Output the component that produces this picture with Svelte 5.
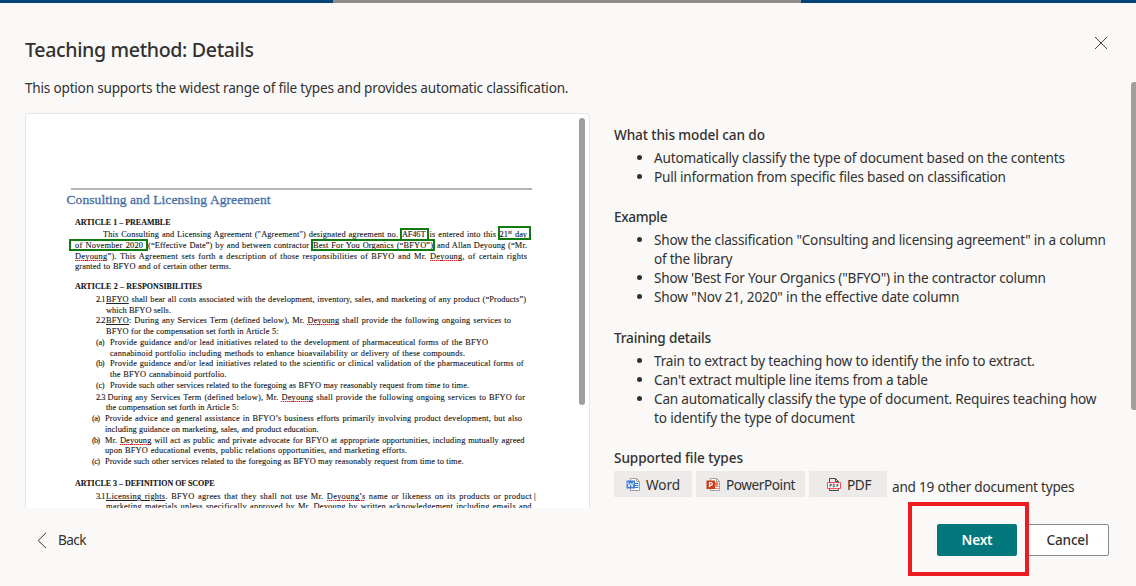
<script>
  // Spreads text over a fixed width; `word` weights how much goes to the spaces.
  function fit(node, { width, word = 0 }) {
    const text = node.textContent;
    const spaces = text.split(' ').length - 1;
    const natural = node.getBoundingClientRect().width;
    const unit = (width - natural) / (text.length - 1 + word * spaces);
    node.style.letterSpacing = unit + 'px';
    node.style.wordSpacing = unit * word + 'px';
  }

  // "~word~" is a spelling mark, "_word_" is underlined.
  function parts(text) {
    return text
      .split(/(~[^~]+~|_[^_]+_)/)
      .filter(Boolean)
      .map((t) =>
        t[0] === '~'
          ? { t: t.slice(1, -1), c: 'spell' }
          : t[0] === '_'
            ? { t: t.slice(1, -1), c: 'under' }
            : { t, c: '' }
      );
  }

  const sections = [
    {
      title: 'What this model can do',
      w: 151,
      items: [
        [['Automatically classify the type of document based on the contents', 411]],
        [['Pull information from specific files based on classification', 352]]
      ]
    },
    {
      title: 'Example',
      w: 53.5,
      items: [
        [
          ['Show the classification "Consulting and licensing agreement" in a column', 452],
          ['of the library', 78.5]
        ],
        [['Show \'Best For Your Organics ("BFYO") in the contractor column', 392]],
        [['Show "Nov 21, 2020" in the effective date column', 305.5]]
      ]
    },
    {
      title: 'Training details',
      w: 97,
      items: [
        [['Train to extract by teaching how to identify the info to extract.', 381]],
        [["Can't extract multiple line items from a table", 274]],
        [
          ['Can automatically classify the type of document. Requires teaching how', 442.5],
          ['to identify the type of document', 201]
        ]
      ]
    }
  ];

  // Row centre, then segments of [start, end, text].
  const source = [
    [222, true, [75, 170.5, 'ARTICLE 1 – PREAMBLE']],
    [234, false, [103, 398, 'This Consulting and Licensing Agreement ("Agreement") designated agreement no.'], [402, 425.5, 'AF46T'], [429.5, 496, 'is entered into this'], [499.5, 508, '21'], [508, 512, 'st'], [515, 527, 'day']],
    [245, false, [75, 143, 'of November 2020'], [148, 309, '(“Effective Date”) by and between contractor'], [313, 433, 'Best For You Organics (“BFYO”)'], [437, 527, 'and Allan Deyoung (“Mr.']],
    [255.5, false, [75, 527, '~Deyoung~”). This Agreement sets forth a description of those responsibilities of BFYO and Mr. ~Deyoung~, of certain rights']],
    [266, false, [75, 231, 'granted to BFYO and of certain other terms.']],
    [286, true, [75, 202, 'ARTICLE 2 – RESPONSIBILITIES']],
    [299, false, [96, 105.5, '2.1'], [106, 526, '_BFYO_ shall bear all costs associated with the development, inventory, sales, and marketing of any product (“Products”)']],
    [310, false, [106, 171, 'which BFYO sells.']],
    [320, false, [96, 105.5, '2.2'], [106, 511, '_BFYO_: During any Services Term (defined below), Mr. ~Deyoung~ shall provide the following ongoing services to']],
    [331, false, [106, 278.5, 'BFYO for the compensation set forth in Article 5:']],
    [342, false, [96, 104.5, '(a)'], [110, 488, 'Provide guidance and/or lead initiatives related to the development of pharmaceutical forms of the BFYO']],
    [352.5, false, [110, 465, 'cannabinoid portfolio including methods to enhance bioavailability or delivery of these compounds.']],
    [363, false, [96, 104.5, '(b)'], [110, 523.5, 'Provide guidance and/or lead initiatives related to the scientific or clinical validation of the pharmaceutical forms of']],
    [374, false, [110, 226.5, 'the BFYO cannabinoid portfolio.']],
    [385, false, [96, 104.5, '(c)'], [110, 469, 'Provide such other services related to the foregoing as BFYO may reasonably request from time to time.']],
    [396.5, false, [96, 105.5, '2.3'], [107.5, 525, 'During any Services Term (defined below), Mr. ~Deyoung~ shall provide the following ongoing services to BFYO for']],
    [407, false, [106, 238.5, 'the compensation set forth in Article 5:']],
    [417.5, false, [92, 100, '(a)'], [105, 522, 'Provide advice and general assistance in BFYO’s business efforts primarily involving product development, but also']],
    [428.5, false, [105, 318.5, 'including guidance on marketing, sales, and product education.']],
    [439.5, false, [92, 100, '(b)'], [105, 524.5, 'Mr. ~Deyoung~ will act as public and private advocate for BFYO at appropriate opportunities, including mutually agreed']],
    [450, false, [105, 407, 'upon BFYO educational events, public relations opportunities, and marketing efforts.']],
    [461, false, [92, 100, '(c)'], [105, 463.5, 'Provide such other services related to the foregoing as BFYO may reasonably request from time to time.']],
    [483, true, [75, 214.5, 'ARTICLE 3 – DEFINITION OF SCOPE']],
    [496, false, [96, 105.5, '3.1'], [106, 531.5, '_Licensing rights_. BFYO agrees that they shall not use Mr. ~Deyoung’s~ name or likeness on its products or product'], [534, 535, '|']],
    [506, false, [106, 531.5, 'marketing materials unless specifically approved by Mr. Deyoung by written acknowledgement including emails and']]
  ];

  let previous = 210;
  const rows = source.map(([y, bold, ...segs]) => {
    const gap = y - 5 - previous;
    previous = y + 5;
    let x = 26;
    return {
      gap,
      bold,
      segs: segs.map(([a, b, text]) => {
        const s = { left: a - x, width: b - a, parts: parts(text), sup: text === 'st', single: text.length < 2 };
        x = b;
        return s;
      })
    };
  });
  const measure = (node, s) => {
    if (!s.single) fit(node, { width: s.width, word: 4 });
  };
</script>

<div class="panel">
  <div class="strip"><i></i><b></b><i></i></div>
  <header>
    <h1><span use:fit={{ width: 229 }}>Teaching method: Details</span></h1>
    <button class="close" aria-label="Close">
      <svg width="14" height="14" viewBox="0 0 14 14"><path d="M1 1l12 12M13 1L1 13" fill="none" stroke="#484644" stroke-width="1" /></svg>
    </button>
  </header>
  <p class="intro"><span use:fit={{ width: 543.5 }}>This option supports the widest range of file types and provides automatic classification.</span></p>

  <main>
    <div class="card">
      <div class="rule"></div>
      <h2><span use:fit={{ width: 204 }}>Consulting and Licensing Agreement</span></h2>
      {#each rows as row}
        <div class="row" class:bold={row.bold} style="margin-top:{row.gap}px">
          {#each row.segs as s}
            <div class="seg" style="margin-left:{s.left}px;width:{s.width}px"><span class="fit" class:sup={s.sup} use:measure={s}>{#each s.parts as p}<span class={p.c}>{p.t}</span>{/each}</span></div>
          {/each}
        </div>
      {/each}
      <div class="mark code"></div>
      <div class="mark day"></div>
      <div class="mark month"></div>
      <div class="mark company"></div>
      <div class="thumb"></div>
    </div>

    <aside>
      {#each sections as s}
        <section>
          <h3><span use:fit={{ width: s.w }}>{s.title}</span></h3>
          <ul>
            {#each s.items as item}
              <li>{#each item as [text, width]}<div><span use:fit={{ width }}>{text}</span></div>{/each}</li>
            {/each}
          </ul>
        </section>
      {/each}
      <h3><span use:fit={{ width: 129 }}>Supported file types</span></h3>
      <div class="types">
        <div class="chip word">
          <svg width="16" height="16" viewBox="0 0 16 16">
            <path d="M4.500 1.500h6l3 3v9h-9z" fill="#fff" stroke="#a19f9d" />
            <path d="M10.500 1.500v3h3" fill="none" stroke="#a19f9d" />
            <path d="M9 6.500h3.500M9 8.500h3.500M9 10.500h3.500" stroke="#2b7cd3" />
            <path d="M.5 3.500H9v8H.5z" fill="#3f7bd0" />
            <path d="M1.700 5l1.200 5L4.700 6l1.500 4 1.300-5" fill="none" stroke="#fff" stroke-width=".9" />
          </svg>
          <span use:fit={{ width: 34 }}>Word</span>
        </div>
        <div class="chip ppt">
          <svg width="16" height="16" viewBox="0 0 16 16">
            <path d="M4.500 1.500h6l3 3v9h-9z" fill="#fff" stroke="#a19f9d" />
            <path d="M10.500 1.500v3h3" fill="none" stroke="#a19f9d" />
            <path d="M9 9.500h3.500M9 11.500h3.500" stroke="#e97b5c" />
            <circle cx="10.500" cy="7" r="2" fill="#e97b5c" />
            <path d="M.5 3.500H9v8.500H.5z" fill="#c43e1c" />
            <path d="M3.500 10.300V5.500h1.400a1.400 1.400 0 0 1 0 2.800H3.500" fill="none" stroke="#fff" stroke-width="1.2" />
          </svg>
          <span use:fit={{ width: 69.5 }}>PowerPoint</span>
        </div>
        <div class="chip pdf">
          <svg width="16" height="16" viewBox="0 0 16 16">
            <path d="M2.500 5V1.500h6l3 3M8.500 1.500v3h3M2.500 11v2.500h9V11" fill="none" stroke="#484644" />
            <path d="M.5 5.500h13v6H.5z" fill="#fff" stroke="#f0505a" />
            <path d="M3 10.300V7h1.300v1.600H3M6.200 7v3h1l.8-.7V7.700L7.200 7zM10 10.300V7h1.700M10 8.600h1.400" fill="none" stroke="#484644" stroke-width=".8" />
          </svg>
          <span use:fit={{ width: 24.5 }}>PDF</span>
        </div>
        <span class="more"><span use:fit={{ width: 182.5 }}>and 19 other document types</span></span>
      </div>
    </aside>
  </main>

  <footer>
    <button class="back">
      <svg width="10" height="17" viewBox="0 0 10 17"><path d="M9 .8L1.200 8.500 9 16.200" fill="none" stroke="#323130" /></svg>
      <span use:fit={{ width: 28.5 }}>Back</span>
    </button>
    <button class="next"><span use:fit={{ width: 31 }}>Next</span></button>
    <button class="cancel"><span use:fit={{ width: 42 }}>Cancel</span></button>
  </footer>
  <div class="page-thumb"></div>
  <div class="callout"></div>
</div>

<style>
  :global(body) { margin: 0; }
  .panel {
    position: relative;
    width: 1136px;
    height: 586px;
    overflow: hidden;
    background: #faf9f8;
    color: #323130;
    font: 13.6px/19px "Noto Sans", "Open Sans", sans-serif;
    display: flex;
    flex-direction: column;
  }
  span { white-space: pre; }
  h1, h2, h3, p, ul { margin: 0; padding: 0; }
  button { padding: 0; border: 0; background: none; font: inherit; color: inherit; }
  .strip { display: grid; grid-template-columns: 333px 468px 1fr; height: 3px; flex: none; }
  .strip i { background: #004578; }
  .strip b { background: #8f8e8d; }
  header { display: flex; justify-content: space-between; height: 75px; flex: none; padding: 33px 28px 0 25px; box-sizing: border-box; }
  h1 { font-size: 19.6px; line-height: 28px; font-weight: 500; }
  .close { width: 14px; height: 14px; display: flex; }
  .intro { height: 35px; flex: none; padding-left: 25px; }
  main { display: flex; height: 395px; flex: none; padding-left: 25px; }
  .card {
    position: relative;
    box-sizing: border-box;
    width: 565px;
    height: 395px;
    overflow: hidden;
    background: #fff;
    border: 1px solid #e6e5e3;
    border-bottom: 0;
    border-radius: 4px 4px 0 0;
    font: 8.4px/10px "Liberation Serif", serif;
    color: #111;
    -webkit-text-stroke: .1px #222;
  }
  .rule { margin: 74px 0 0 45px; width: 461px; height: 2px; background: #b5b5b5; }
  h2 { margin: -1px 0 0 40.5px; height: 22px; font: 13.5px/21px "Liberation Serif", serif; color: #456fa6; -webkit-text-stroke: .3px #456fa6; }
  .row { display: flex; height: 10px; }
  .bold { font-weight: 700; font-size: 8px; }
  .seg { flex: none; height: 10px; }
  .sup { font-size: 6px; position: relative; top: -3px; }
  .under { text-decoration: underline; text-decoration-thickness: 1px; }
  .spell { background: repeating-linear-gradient(90deg, #e22 0 1px, #f99 1px 2px) bottom / 100% 1px no-repeat; }
  .mark { position: absolute; box-sizing: border-box; border: 2px solid #107c10; }
  .code { left: 374px; top: 114px; width: 29px; height: 13px; }
  .day { left: 472px; top: 112px; width: 33px; height: 14px; }
  .month { left: 43px; top: 125px; width: 79px; height: 12px; }
  .company { left: 285px; top: 125px; width: 124px; height: 12px; }
  .thumb { position: absolute; left: 553px; top: 4px; width: 6px; height: 287px; border-radius: 3px; background: #a19f9e; }
  aside { padding: 12px 0 0 24px; }
  section { margin-bottom: 21px; }
  section:nth-of-type(2) { margin-bottom: 22px; }
  h3 { font-size: 13.6px; line-height: 19px; font-weight: 500; }
  ul { margin-top: 4px; list-style: none; }
  li { position: relative; padding-left: 40px; }
  li::before { content: ""; position: absolute; left: 23px; top: 6.5px; width: 5px; height: 5px; border-radius: 50%; background: #323130; }
  li div { height: 19px; }
  .types { display: flex; gap: 4px; margin-top: 4px; }
  .chip { display: flex; align-items: center; box-sizing: border-box; height: 26px; padding-top: 1px; background: #edebe9; }
  .chip svg { flex: none; margin-right: 4px; }
  .word { width: 78px; padding-left: 12px; }
  .ppt { width: 109px; padding-left: 10px; }
  .pdf { width: 78px; padding-left: 18px; }
  .more { padding: 6px 0 0 1px; }
  footer { display: flex; padding: 16px 27px 0 37px; }
  .back { display: flex; align-items: center; gap: 11px; height: 32px; margin-right: auto; }
  .back span { margin-top: -1px; }
  .next, .cancel { box-sizing: border-box; width: 80px; height: 32px; border-radius: 2px; font-weight: 600; padding-bottom: 2px; }
  .next { background: #03787c; color: #fff; margin-right: 9px; }
  .cancel { width: 83px; background: #fff; border: 1px solid #8a8886; font-weight: 500; }
  .page-thumb { position: absolute; right: 0; top: 82px; width: 5px; height: 328px; border-radius: 3px 0 0 3px; background: #a19f9e; }
  .callout { position: absolute; box-sizing: border-box; left: 908px; top: 502px; width: 121px; height: 74px; border: 4px solid #ed1c24; }
</style>
